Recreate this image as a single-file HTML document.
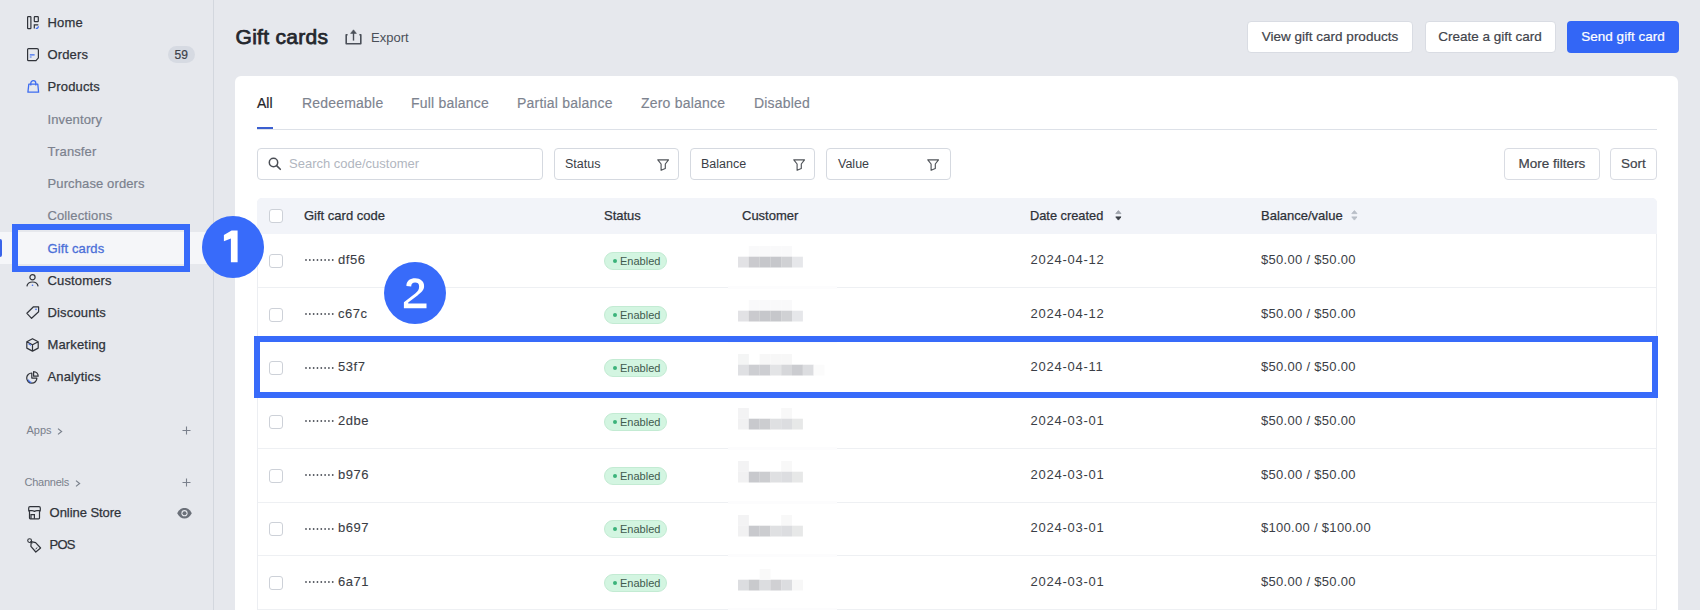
<!DOCTYPE html>
<html><head><meta charset="utf-8">
<style>
*{margin:0;padding:0;box-sizing:border-box}
html,body{width:1700px;height:610px;overflow:hidden;background:#e6e8ed;font-family:"Liberation Sans",sans-serif;color:#2e3138}
.abs{position:absolute}
#side{position:absolute;left:0;top:0;width:214px;height:610px;background:#e6e8ed;border-right:1px solid #d3d7de}
.nav{position:absolute;left:47.5px;font-size:13px;line-height:16px;letter-spacing:0.15px;color:#30333a;-webkit-text-stroke:0.25px #30333a;white-space:nowrap}
.sub{position:absolute;left:47.5px;font-size:13px;line-height:16px;color:#7b818d;-webkit-text-stroke:0.2px #7b818d;letter-spacing:0.12px;white-space:nowrap}
.ic{position:absolute;left:26px}
svg{overflow:visible}
.t{position:absolute;white-space:nowrap;line-height:16px}
.btn{position:absolute;background:#fff;border:1px solid #d9dce3;border-radius:4px;font-size:13.5px;color:#41444b;-webkit-text-stroke:0.2px #41444b;text-align:center;white-space:nowrap}
.filt{position:absolute;top:148px;height:32px;background:#fff;border:1px solid #d5d9e0;border-radius:4px;font-size:12.5px;color:#3a3e46}
.row{position:absolute;left:257px;width:1400px;border-bottom:1px solid #eceef2}
.cb{position:absolute;left:269px;width:14px;height:14px;border:1.5px solid #cdd1d8;border-radius:3px;background:#fff}
.badge{position:absolute;left:604px;width:63px;height:18px;border-radius:9px;background:#d3f5e1;border:1px solid #c3ebd3;font-size:11px;color:#3f5a4e;line-height:16px}
.badge i{position:absolute;left:8px;top:6px;width:4px;height:4px;border-radius:2px;background:#3bb37a}
.badge span{position:absolute;left:15px;top:0}
.code{position:absolute;left:338px;font-size:13px;letter-spacing:0.5px;color:#3a3d44;-webkit-text-stroke:0.1px #3a3d44}
.date{position:absolute;left:1030.5px;font-size:13px;letter-spacing:0.75px;color:#3a3e46}
.bal{position:absolute;left:1261px;font-size:13px;letter-spacing:0.3px;color:#3a3e46}
.hd{position:absolute;top:208px;font-size:13px;color:#2e3138;-webkit-text-stroke:0.25px #2e3138}
.annot{position:absolute;border:6px solid #386bfa}
.circ{position:absolute;width:62px;height:62px;border-radius:31px;background:#386bfa;color:#fff;font-size:44px;text-align:center;line-height:62px}
</style></head><body>
<div id="side">
  <svg class="ic" style="left:26.5px;top:15.5px" width="13" height="14" viewBox="0 0 13 14"><rect x="0.6" y="0.6" width="3.3" height="12" rx="0.6" fill="none" stroke="#30333a" stroke-width="1.2"/><rect x="7.3" y="0.6" width="4" height="5" rx="0.6" fill="none" stroke="#30333a" stroke-width="1.2"/><path d="M7.3 12.6 V8.8 H11.3" fill="none" stroke="#30333a" stroke-width="1.2"/><path d="M8.8 12.3 Q11.2 12.6 11.4 10.2" fill="none" stroke="#3e6cf0" stroke-width="1.3"/></svg>
  <div class="nav" style="top:15px">Home</div>
  <svg class="ic" style="left:26.5px;top:48px" width="13" height="14" viewBox="0 0 13 14"><path d="M1.5 0.6 H10 Q11.4 0.6 11.4 2 V9.8 L9 12.6 H1.5 Q0.6 12.6 0.6 11.7 V1.5 Q0.6 0.6 1.5 0.6 Z" fill="none" stroke="#30333a" stroke-width="1.2" stroke-linejoin="round"/><path d="M2.8 6.8 H7.6 M2.8 9 H4.6" stroke="#3e6cf0" stroke-width="1.2"/></svg>
  <div class="nav" style="top:47px">Orders</div>
  <div class="abs" style="left:167.5px;top:46px;width:27.5px;height:16.5px;border-radius:8.5px;background:#d6dae2;font-size:12px;line-height:18.5px;text-align:center;color:#3e424a;-webkit-text-stroke:0.2px #3e424a">59</div>
  <svg class="ic" style="left:26.5px;top:80px" width="13" height="13" viewBox="0 0 13 13"><path d="M1.8 4.2 H10.8 L11.6 12.2 H0.9 Z" fill="none" stroke="#3e6cf0" stroke-width="1.3" stroke-linejoin="round"/><path d="M3.8 5.5 V3.2 a2.5 2.5 0 0 1 5 0 V5.5" fill="none" stroke="#3e6cf0" stroke-width="1.3"/></svg>
  <div class="nav" style="top:79px">Products</div>
  <div class="sub" style="top:112px">Inventory</div>
  <div class="sub" style="top:144px">Transfer</div>
  <div class="sub" style="top:176px">Purchase orders</div>
  <div class="sub" style="top:208px">Collections</div>
  <div class="abs" style="left:0;top:231.7px;width:213px;height:32.5px;background:#f5f6f9"></div>
  <div class="abs" style="left:-1px;top:239px;width:3px;height:17.5px;border-radius:0 2px 2px 0;background:#3a64ea"></div>
  <div class="sub" style="top:240.5px;color:#4b6fd8;-webkit-text-stroke:0.3px #4b6fd8">Gift cards</div>
  <svg class="ic" style="top:274px" width="13" height="13" viewBox="0 0 13 13"><circle cx="6.5" cy="3.3" r="2.6" fill="none" stroke="#30333a" stroke-width="1.2"/><path d="M0.9 12.4 Q1.5 8 6.5 8 Q11.5 8 12.1 12.4" fill="none" stroke="#30333a" stroke-width="1.2"/><circle cx="6.5" cy="11.2" r="0.8" fill="#3e6cf0"/></svg>
  <div class="nav" style="top:273px">Customers</div>
  <svg class="ic" style="left:25.5px;top:306px" width="14" height="13" viewBox="0 0 14 13"><path d="M7.5 0.8 H12.6 V5.8 L5.6 12.3 L0.9 7.3 Z" fill="none" stroke="#30333a" stroke-width="1.2" stroke-linejoin="round"/><circle cx="10" cy="3.4" r="0.8" fill="#3e6cf0"/></svg>
  <div class="nav" style="top:305px">Discounts</div>
  <svg class="ic" style="top:338px" width="13" height="14" viewBox="0 0 13 14"><path d="M6.5 0.7 L12.2 3.7 V10.1 L6.5 13.1 L0.8 10.1 V3.7 Z M0.8 3.7 L6.5 6.8 L12.2 3.7 M6.5 6.8 V13.1" fill="none" stroke="#30333a" stroke-width="1.2" stroke-linejoin="round"/><path d="M2.5 5.8 L5 7.2" stroke="#3e6cf0" stroke-width="1.1"/></svg>
  <div class="nav" style="top:337px">Marketing</div>
  <svg class="ic" style="top:371px" width="13" height="14" viewBox="0 0 13 14"><path d="M5.8 2 a5.1 5.1 0 1 0 5.1 5.1 H5.8 Z" fill="none" stroke="#30333a" stroke-width="1.2" stroke-linejoin="round"/><path d="M7.6 0.6 a4.6 4.6 0 0 1 4.6 4.6 H7.6 Z" fill="none" stroke="#30333a" stroke-width="1.2" stroke-linejoin="round"/><path d="M2.3 8.6 Q3 11 5.3 11.5" stroke="#3e6cf0" stroke-width="1.3" fill="none"/></svg>
  <div class="nav" style="top:369px">Analytics</div>

  <div class="t" style="left:26.5px;top:421.5px;font-size:11px;color:#7a808c">Apps</div>
  <svg class="abs" style="left:57px;top:427.5px" width="6" height="7" viewBox="0 0 6 7"><path d="M1 0.6 L4.6 3.5 L1 6.4" fill="none" stroke="#7a808c" stroke-width="1.2"/></svg>
  <svg class="abs" style="left:181.5px;top:426px" width="9" height="9" viewBox="0 0 9 9"><path d="M4.5 0.5 V8.5 M0.5 4.5 H8.5" stroke="#7a808c" stroke-width="1.1"/></svg>
  <div class="t" style="left:24.5px;top:473.5px;font-size:11px;letter-spacing:-0.25px;color:#7a808c">Channels</div>
  <svg class="abs" style="left:74.5px;top:479.5px" width="6" height="7" viewBox="0 0 6 7"><path d="M1 0.6 L4.6 3.5 L1 6.4" fill="none" stroke="#7a808c" stroke-width="1.2"/></svg>
  <svg class="abs" style="left:181.5px;top:478px" width="9" height="9" viewBox="0 0 9 9"><path d="M4.5 0.5 V8.5 M0.5 4.5 H8.5" stroke="#7a808c" stroke-width="1.1"/></svg>
  <svg class="ic" style="left:27.5px;top:506px" width="13" height="14" viewBox="0 0 13 14"><path d="M2 0.7 H11 Q12.3 0.7 12.3 2 V4.2 Q12.3 5.4 11.5 5.6 V12 Q11.5 12.8 10.7 12.8 H2.3 Q1.5 12.8 1.5 12 V5.6 Q0.7 5.4 0.7 4.2 V2 Q0.7 0.7 2 0.7 Z" fill="none" stroke="#30333a" stroke-width="1.2" stroke-linejoin="round"/><path d="M0.9 4.6 H4 Q6.5 4.6 6.5 6 Q6.5 4.6 9 4.6 H12.1 M3 12.8 V8.6 H6.4 V12.8" fill="none" stroke="#30333a" stroke-width="1.2"/></svg>
  <div class="nav" style="top:505px;left:49.6px;letter-spacing:-0.05px">Online Store</div>
  <svg class="abs" style="left:177px;top:507.6px" width="15" height="11" viewBox="0 0 15 11"><path d="M0.2 5.2 C2 1.5 4.5 0 7.5 0 C10.5 0 13 1.5 14.8 5.2 C13 8.9 10.5 10.4 7.5 10.4 C4.5 10.4 2 8.9 0.2 5.2Z" fill="#6b7079"/><circle cx="7.5" cy="5.2" r="3.1" fill="#e6e8ed"/><circle cx="7.5" cy="5.2" r="2" fill="#6b7079"/></svg>
  <svg class="ic" style="left:26.5px;top:537.5px" width="15" height="15" viewBox="0 0 15 15"><path d="M4.2 3.6 L8.6 4.6 L13.6 10 L8.8 14 L3.9 8.4 Z" fill="none" stroke="#30333a" stroke-width="1.2" stroke-linejoin="round"/><circle cx="2.6" cy="2.6" r="1.9" fill="none" stroke="#30333a" stroke-width="1.1"/><path d="M3.6 3.6 L5.4 5.4" stroke="#30333a" stroke-width="1.1"/><path d="M8.6 11 L10.3 9.6" stroke="#30333a" stroke-width="1"/></svg>
  <div class="nav" style="top:537px;left:49.6px;letter-spacing:-0.8px">POS</div>
</div>

<!-- header -->
<div class="t" style="left:235.5px;top:26.2px;font-size:21px;line-height:22px;letter-spacing:0.3px;color:#24272d;-webkit-text-stroke:0.75px #24272d">Gift cards</div>
<svg class="abs" style="left:345px;top:29px" width="17" height="16" viewBox="0 0 17 16"><path d="M2.6 5.8 H1.2 V14.7 H15.8 V5.8 H14.4" fill="none" stroke="#4a4f58" stroke-width="1.6" stroke-linejoin="round"/><path d="M8.5 11.6 V3.5" fill="none" stroke="#4a4f58" stroke-width="1.4"/><path d="M5.6 4.4 L8.5 0.8 L11.4 4.4 Z" fill="#4a4f58" stroke="#4a4f58" stroke-width="0.6" stroke-linejoin="round"/></svg>
<div class="t" style="left:371px;top:30px;font-size:13px;color:#4a4f58">Export</div>

<div class="btn" style="left:1247px;top:21px;width:166px;height:32px;line-height:30px">View gift card products</div>
<div class="btn" style="left:1424.5px;top:21px;width:131px;height:32px;line-height:30px">Create a gift card</div>
<div class="btn" style="left:1567px;top:21px;width:112px;height:32px;line-height:32px;background:#3366f6;border:none;color:#fff;-webkit-text-stroke:0.2px #fff">Send gift card</div>

<!-- card -->
<div class="abs" style="left:235px;top:76px;width:1443px;height:600px;background:#fff;border-radius:6px"></div>
<div class="t" style="left:257px;top:95px;font-size:14px;color:#1f2329;-webkit-text-stroke:0.2px #1f2329">All</div>
<div class="t" style="left:302px;top:95px;font-size:14px;letter-spacing:0.2px;color:#7d838f;-webkit-text-stroke:0.15px #7d838f">Redeemable</div>
<div class="t" style="left:411px;top:95px;font-size:14px;letter-spacing:0.2px;color:#7d838f;-webkit-text-stroke:0.15px #7d838f">Full balance</div>
<div class="t" style="left:517px;top:95px;font-size:14px;letter-spacing:0.2px;color:#7d838f;-webkit-text-stroke:0.15px #7d838f">Partial balance</div>
<div class="t" style="left:641px;top:95px;font-size:14px;letter-spacing:0.2px;color:#7d838f;-webkit-text-stroke:0.15px #7d838f">Zero balance</div>
<div class="t" style="left:754px;top:95px;font-size:14px;letter-spacing:0.2px;color:#7d838f;-webkit-text-stroke:0.15px #7d838f">Disabled</div>
<div class="abs" style="left:257px;top:129px;width:1400px;height:1px;background:#dde1e8"></div>
<div class="abs" style="left:257px;top:127px;width:16px;height:2px;background:#3b5fd0"></div>

<div class="filt" style="left:257px;width:286px"></div>
<svg class="abs" style="left:268px;top:157px" width="14" height="13" viewBox="0 0 14 13"><circle cx="5.5" cy="5.5" r="4.2" fill="none" stroke="#4a4e55" stroke-width="1.5"/><path d="M8.6 8.6 L12.3 12.3" stroke="#4a4e55" stroke-width="1.6" stroke-linecap="round"/></svg>
<div class="t" style="left:289px;top:156px;font-size:13px;color:#b1b6c0">Search code/customer</div>

<div class="filt" style="left:554px;width:125px"><span class="t" style="left:10px;top:7px">Status</span></div>
<div class="filt" style="left:690px;width:125px"><span class="t" style="left:10px;top:7px">Balance</span></div>
<div class="filt" style="left:826px;width:125px"><span class="t" style="left:11px;top:7px">Value</span></div>
<svg class="abs" style="left:656.5px;top:159.3px" width="13" height="13" viewBox="0 0 13 13"><path d="M0.8 0.8 H11.5 L8.3 5 V9.4 L4.1 11.3 V5 Z" fill="none" stroke="#505459" stroke-width="1.15" stroke-linejoin="round"/></svg>
<svg class="abs" style="left:792.5px;top:159.3px" width="13" height="13" viewBox="0 0 13 13"><path d="M0.8 0.8 H11.5 L8.3 5 V9.4 L4.1 11.3 V5 Z" fill="none" stroke="#505459" stroke-width="1.15" stroke-linejoin="round"/></svg>
<svg class="abs" style="left:927px;top:158.8px" width="13" height="13" viewBox="0 0 13 13"><path d="M0.8 0.8 H11.5 L8.3 5 V9.4 L4.1 11.3 V5 Z" fill="none" stroke="#505459" stroke-width="1.15" stroke-linejoin="round"/></svg>

<div class="btn" style="left:1504px;top:148px;width:96px;height:32px;line-height:30px">More filters</div>
<div class="btn" style="left:1610px;top:148px;width:47px;height:32px;line-height:30px">Sort</div>

<!-- table -->
<div class="abs" style="left:257px;top:198px;width:1400px;height:420px;border:1px solid #eceef2;border-radius:5px 5px 0 0"></div>
<div class="abs" style="left:257px;top:198px;width:1400px;height:36px;background:#f2f4f9;border-radius:5px 5px 0 0"></div>
<div class="cb" style="top:209px"></div>
<div class="hd" style="left:304px">Gift card code</div>
<div class="hd" style="left:604px">Status</div>
<div class="hd" style="left:742px">Customer</div>
<div class="hd" style="left:1030px;font-size:12.8px">Date created</div>
<div class="hd" style="left:1261px">Balance/value</div>
<svg class="abs" style="left:1114.8px;top:210.3px" width="7" height="11" viewBox="0 0 7 11"><path d="M0.8 3.6 L3.4 0.6 L6 3.6 Z" fill="#9ea3ac" stroke="#9ea3ac" stroke-width="0.9" stroke-linejoin="round"/><path d="M0.8 6.9 L3.4 10.1 L6 6.9 Z" fill="#3a3e46" stroke="#3a3e46" stroke-width="0.9" stroke-linejoin="round"/></svg>
<svg class="abs" style="left:1351.3px;top:210.3px" width="7" height="11" viewBox="0 0 7 11"><path d="M0.8 3.6 L3.4 0.6 L6 3.6 Z" fill="#b9bec7" stroke="#b9bec7" stroke-width="0.9" stroke-linejoin="round"/><path d="M0.8 6.9 L3.4 10.1 L6 6.9 Z" fill="#b9bec7" stroke="#b9bec7" stroke-width="0.9" stroke-linejoin="round"/></svg>

<!--ROWS-->
<div class="abs" style="left:258px;top:286.97px;width:1398px;height:1px;background:#eef0f3"></div>
<div class="abs" style="left:728px;top:285.97px;width:109px;height:3px;background:#fcfcfd"></div>
<div class="cb" style="top:254.13px"></div>
<svg class="abs" style="left:304.2px;top:258.33px" width="32" height="4" fill="#4f535b"><circle cx="2.00" cy="2" r="0.9"/><circle cx="5.82" cy="2" r="0.9"/><circle cx="9.64" cy="2" r="0.9"/><circle cx="13.46" cy="2" r="0.9"/><circle cx="17.28" cy="2" r="0.9"/><circle cx="21.10" cy="2" r="0.9"/><circle cx="24.92" cy="2" r="0.9"/><circle cx="28.74" cy="2" r="0.9"/></svg>
<div class="t code" style="left:338.1px;top:252.13px">df56</div>
<div class="badge" style="top:252.03px"><i></i><span>Enabled</span></div>
<div class="t date" style="top:252.13px">2024-04-12</div>
<div class="t bal" style="top:252.13px">$50.00 / $50.00</div>
<svg class="abs" style="left:738.3px;top:246.44px" width="90" height="22"><rect x="10.8" y="0.0" width="10.9" height="10.8" fill="#f9f9fa"/><rect x="21.6" y="0.0" width="10.9" height="10.8" fill="#f9f9fa"/><rect x="32.4" y="0.0" width="10.9" height="10.8" fill="#f9f9fa"/><rect x="43.2" y="0.0" width="10.9" height="10.8" fill="#f9f9fa"/><rect x="0.0" y="10.7" width="10.9" height="10.8" fill="#e2e2e5"/><rect x="10.8" y="10.7" width="10.9" height="10.8" fill="#cacace"/><rect x="21.6" y="10.7" width="10.9" height="10.8" fill="#c6c7cb"/><rect x="32.4" y="10.7" width="10.9" height="10.8" fill="#c6c7cb"/><rect x="43.2" y="10.7" width="10.9" height="10.8" fill="#d0d1d4"/><rect x="54.0" y="10.7" width="10.9" height="10.8" fill="#e6e7ea"/></svg>
<div class="abs" style="left:258px;top:340.64px;width:1398px;height:1px;background:#eef0f3"></div>
<div class="abs" style="left:728px;top:339.64px;width:109px;height:3px;background:#fcfcfd"></div>
<div class="cb" style="top:307.81px"></div>
<svg class="abs" style="left:304.2px;top:312.00px" width="32" height="4" fill="#4f535b"><circle cx="2.00" cy="2" r="0.9"/><circle cx="5.82" cy="2" r="0.9"/><circle cx="9.64" cy="2" r="0.9"/><circle cx="13.46" cy="2" r="0.9"/><circle cx="17.28" cy="2" r="0.9"/><circle cx="21.10" cy="2" r="0.9"/><circle cx="24.92" cy="2" r="0.9"/><circle cx="28.74" cy="2" r="0.9"/></svg>
<div class="t code" style="left:338.1px;top:305.81px">c67c</div>
<div class="badge" style="top:305.70px"><i></i><span>Enabled</span></div>
<div class="t date" style="top:305.81px">2024-04-12</div>
<div class="t bal" style="top:305.81px">$50.00 / $50.00</div>
<svg class="abs" style="left:738.3px;top:300.11px" width="90" height="22"><rect x="10.8" y="0.0" width="10.9" height="10.8" fill="#f9f9fa"/><rect x="21.6" y="0.0" width="10.9" height="10.8" fill="#f9f9fa"/><rect x="32.4" y="0.0" width="10.9" height="10.8" fill="#f9f9fa"/><rect x="43.2" y="0.0" width="10.9" height="10.8" fill="#f9f9fa"/><rect x="0.0" y="10.7" width="10.9" height="10.8" fill="#e2e2e5"/><rect x="10.8" y="10.7" width="10.9" height="10.8" fill="#cacace"/><rect x="21.6" y="10.7" width="10.9" height="10.8" fill="#c6c7cb"/><rect x="32.4" y="10.7" width="10.9" height="10.8" fill="#c6c7cb"/><rect x="43.2" y="10.7" width="10.9" height="10.8" fill="#d0d1d4"/><rect x="54.0" y="10.7" width="10.9" height="10.8" fill="#e6e7ea"/></svg>
<div class="abs" style="left:258px;top:394.31px;width:1398px;height:1px;background:#eef0f3"></div>
<div class="abs" style="left:728px;top:393.31px;width:109px;height:3px;background:#fcfcfd"></div>
<div class="cb" style="top:361.47px"></div>
<svg class="abs" style="left:304.2px;top:365.67px" width="32" height="4" fill="#4f535b"><circle cx="2.00" cy="2" r="0.9"/><circle cx="5.82" cy="2" r="0.9"/><circle cx="9.64" cy="2" r="0.9"/><circle cx="13.46" cy="2" r="0.9"/><circle cx="17.28" cy="2" r="0.9"/><circle cx="21.10" cy="2" r="0.9"/><circle cx="24.92" cy="2" r="0.9"/><circle cx="28.74" cy="2" r="0.9"/></svg>
<div class="t code" style="left:338.1px;top:359.47px">53f7</div>
<div class="badge" style="top:359.37px"><i></i><span>Enabled</span></div>
<div class="t date" style="top:359.47px">2024-04-11</div>
<div class="t bal" style="top:359.47px">$50.00 / $50.00</div>
<svg class="abs" style="left:738.3px;top:353.67px" width="90" height="22"><rect x="0.0" y="0.0" width="10.9" height="10.8" fill="#f4f5f5"/><rect x="21.6" y="0.0" width="10.9" height="10.8" fill="#f7f7f7"/><rect x="32.4" y="0.0" width="10.9" height="10.8" fill="#f7f7f7"/><rect x="43.2" y="0.0" width="10.9" height="10.8" fill="#f7f7f7"/><rect x="0.0" y="10.7" width="10.9" height="10.8" fill="#dfe0e3"/><rect x="10.8" y="10.7" width="10.9" height="10.8" fill="#cdced2"/><rect x="21.6" y="10.7" width="10.9" height="10.8" fill="#cdced2"/><rect x="32.4" y="10.7" width="10.9" height="10.8" fill="#e3e4e6"/><rect x="43.2" y="10.7" width="10.9" height="10.8" fill="#d6d7da"/><rect x="54.0" y="10.7" width="10.9" height="10.8" fill="#cbccd0"/><rect x="64.8" y="10.7" width="10.9" height="10.8" fill="#dcdde0"/><rect x="75.6" y="10.7" width="10.9" height="10.8" fill="#fbfbfb"/></svg>
<div class="abs" style="left:258px;top:447.98px;width:1398px;height:1px;background:#eef0f3"></div>
<div class="abs" style="left:728px;top:446.98px;width:109px;height:3px;background:#fcfcfd"></div>
<div class="cb" style="top:415.14px"></div>
<svg class="abs" style="left:304.2px;top:419.34px" width="32" height="4" fill="#4f535b"><circle cx="2.00" cy="2" r="0.9"/><circle cx="5.82" cy="2" r="0.9"/><circle cx="9.64" cy="2" r="0.9"/><circle cx="13.46" cy="2" r="0.9"/><circle cx="17.28" cy="2" r="0.9"/><circle cx="21.10" cy="2" r="0.9"/><circle cx="24.92" cy="2" r="0.9"/><circle cx="28.74" cy="2" r="0.9"/></svg>
<div class="t code" style="left:338.1px;top:413.14px">2dbe</div>
<div class="badge" style="top:413.04px"><i></i><span>Enabled</span></div>
<div class="t date" style="top:413.14px">2024-03-01</div>
<div class="t bal" style="top:413.14px">$50.00 / $50.00</div>
<svg class="abs" style="left:738.3px;top:407.55px" width="90" height="22"><rect x="0.0" y="0.0" width="10.9" height="10.8" fill="#f3f3f4"/><rect x="0.0" y="10.7" width="10.9" height="10.8" fill="#f1f1f2"/><rect x="43.2" y="0.0" width="10.9" height="10.8" fill="#f8f8f8"/><rect x="10.8" y="10.7" width="10.9" height="10.8" fill="#c8c9cd"/><rect x="21.6" y="10.7" width="10.9" height="10.8" fill="#cccdd0"/><rect x="32.4" y="10.7" width="10.9" height="10.8" fill="#dfe0e2"/><rect x="43.2" y="10.7" width="10.9" height="10.8" fill="#dcdde0"/><rect x="54.0" y="10.7" width="10.9" height="10.8" fill="#e7e8e8"/></svg>
<div class="abs" style="left:258px;top:501.65px;width:1398px;height:1px;background:#eef0f3"></div>
<div class="abs" style="left:728px;top:500.65px;width:109px;height:3px;background:#fcfcfd"></div>
<div class="cb" style="top:468.81px"></div>
<svg class="abs" style="left:304.2px;top:473.01px" width="32" height="4" fill="#4f535b"><circle cx="2.00" cy="2" r="0.9"/><circle cx="5.82" cy="2" r="0.9"/><circle cx="9.64" cy="2" r="0.9"/><circle cx="13.46" cy="2" r="0.9"/><circle cx="17.28" cy="2" r="0.9"/><circle cx="21.10" cy="2" r="0.9"/><circle cx="24.92" cy="2" r="0.9"/><circle cx="28.74" cy="2" r="0.9"/></svg>
<div class="t code" style="left:338.1px;top:466.81px">b976</div>
<div class="badge" style="top:466.71px"><i></i><span>Enabled</span></div>
<div class="t date" style="top:466.81px">2024-03-01</div>
<div class="t bal" style="top:466.81px">$50.00 / $50.00</div>
<svg class="abs" style="left:738.3px;top:461.22px" width="90" height="22"><rect x="0.0" y="0.0" width="10.9" height="10.8" fill="#f3f3f4"/><rect x="0.0" y="10.7" width="10.9" height="10.8" fill="#f1f1f2"/><rect x="43.2" y="0.0" width="10.9" height="10.8" fill="#f8f8f8"/><rect x="10.8" y="10.7" width="10.9" height="10.8" fill="#c8c9cd"/><rect x="21.6" y="10.7" width="10.9" height="10.8" fill="#cccdd0"/><rect x="32.4" y="10.7" width="10.9" height="10.8" fill="#dfe0e2"/><rect x="43.2" y="10.7" width="10.9" height="10.8" fill="#dcdde0"/><rect x="54.0" y="10.7" width="10.9" height="10.8" fill="#e7e8e8"/></svg>
<div class="abs" style="left:258px;top:555.32px;width:1398px;height:1px;background:#eef0f3"></div>
<div class="abs" style="left:728px;top:554.32px;width:109px;height:3px;background:#fcfcfd"></div>
<div class="cb" style="top:522.49px"></div>
<svg class="abs" style="left:304.2px;top:526.69px" width="32" height="4" fill="#4f535b"><circle cx="2.00" cy="2" r="0.9"/><circle cx="5.82" cy="2" r="0.9"/><circle cx="9.64" cy="2" r="0.9"/><circle cx="13.46" cy="2" r="0.9"/><circle cx="17.28" cy="2" r="0.9"/><circle cx="21.10" cy="2" r="0.9"/><circle cx="24.92" cy="2" r="0.9"/><circle cx="28.74" cy="2" r="0.9"/></svg>
<div class="t code" style="left:338.1px;top:520.49px">b697</div>
<div class="badge" style="top:520.38px"><i></i><span>Enabled</span></div>
<div class="t date" style="top:520.49px">2024-03-01</div>
<div class="t bal" style="top:520.49px">$100.00 / $100.00</div>
<svg class="abs" style="left:738.3px;top:514.88px" width="90" height="22"><rect x="0.0" y="0.0" width="10.9" height="10.8" fill="#f3f3f4"/><rect x="0.0" y="10.7" width="10.9" height="10.8" fill="#f1f1f2"/><rect x="43.2" y="0.0" width="10.9" height="10.8" fill="#f8f8f8"/><rect x="10.8" y="10.7" width="10.9" height="10.8" fill="#c8c9cd"/><rect x="21.6" y="10.7" width="10.9" height="10.8" fill="#cccdd0"/><rect x="32.4" y="10.7" width="10.9" height="10.8" fill="#dfe0e2"/><rect x="43.2" y="10.7" width="10.9" height="10.8" fill="#dcdde0"/><rect x="54.0" y="10.7" width="10.9" height="10.8" fill="#e7e8e8"/></svg>
<div class="abs" style="left:258px;top:608.99px;width:1398px;height:1px;background:#eef0f3"></div>
<div class="abs" style="left:728px;top:607.99px;width:109px;height:3px;background:#fcfcfd"></div>
<div class="cb" style="top:576.15px"></div>
<svg class="abs" style="left:304.2px;top:580.36px" width="32" height="4" fill="#4f535b"><circle cx="2.00" cy="2" r="0.9"/><circle cx="5.82" cy="2" r="0.9"/><circle cx="9.64" cy="2" r="0.9"/><circle cx="13.46" cy="2" r="0.9"/><circle cx="17.28" cy="2" r="0.9"/><circle cx="21.10" cy="2" r="0.9"/><circle cx="24.92" cy="2" r="0.9"/><circle cx="28.74" cy="2" r="0.9"/></svg>
<div class="t code" style="left:338.1px;top:574.15px">6a71</div>
<div class="badge" style="top:574.05px"><i></i><span>Enabled</span></div>
<div class="t date" style="top:574.15px">2024-03-01</div>
<div class="t bal" style="top:574.15px">$50.00 / $50.00</div>
<svg class="abs" style="left:738.3px;top:569.35px" width="90" height="22"><rect x="0.0" y="10.7" width="10.9" height="10.8" fill="#dcdde0"/><rect x="10.8" y="10.7" width="10.9" height="10.8" fill="#c9cacd"/><rect x="21.6" y="10.7" width="10.9" height="10.8" fill="#dcdde0"/><rect x="32.4" y="10.7" width="10.9" height="10.8" fill="#d0d0d3"/><rect x="43.2" y="10.7" width="10.9" height="10.8" fill="#dcdde0"/><rect x="54.0" y="10.7" width="10.9" height="10.8" fill="#f7f7f7"/><rect x="21.6" y="0.0" width="10.9" height="10.8" fill="#f9f9f9"/></svg>
<!--/ROWS-->
<!--ANN-->
<div class="annot" style="left:12px;top:224px;width:178px;height:48px"></div>
<div class="annot" style="left:254px;top:336px;width:1404px;height:62px"></div>
<svg class="abs" style="left:202px;top:216px" width="62" height="62" viewBox="0 0 62 62"><circle cx="31" cy="31" r="31" fill="#386bfa"/><path d="M29.6 14.4 H35.6 V46.3 H28.9 V22.6 L21.9 25.2 V19 Z" fill="#fff"/></svg>
<svg class="abs" style="left:384px;top:262px" width="62" height="62" viewBox="0 0 62 62"><circle cx="31" cy="31" r="31" fill="#386bfa"/><path d="M22.4 24 C22.4 18.6 26.4 16.3 31.2 16.3 C36.4 16.3 40.1 19.4 40.1 24 C40.1 28.3 37.2 30.6 33.5 33.4 L24.2 40.6 V41.6 H42.5 V46.3 H19.9 V40.3 L31.2 31.4 C34.1 29.2 35.1 27.6 35.1 24.2 C35.1 21.6 33.5 20.6 31.1 20.6 C28.6 20.6 27.2 22 27.2 24.6 Z" fill="#fff"/></svg>
<!--/ANN-->
</body></html>
